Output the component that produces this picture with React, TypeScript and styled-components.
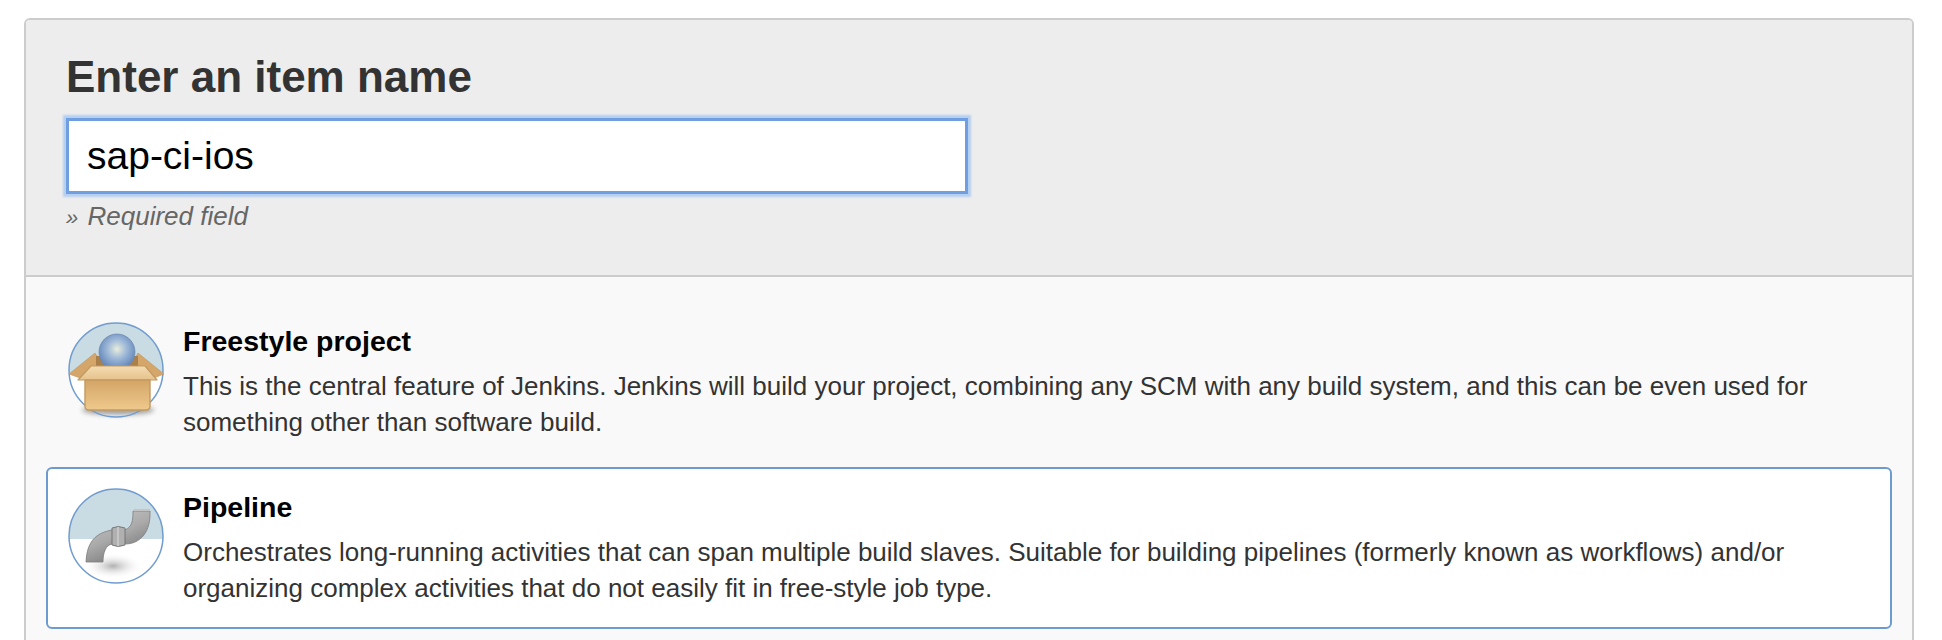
import React from 'react';
import styled, { createGlobalStyle } from 'styled-components';

const GlobalStyle = createGlobalStyle`
  html, body {
    margin: 0;
    height: 640px;
    overflow: hidden;
    background: #fff;
    font-family: 'Liberation Sans', Arial, sans-serif;
  }
`;

function BoxIcon() {
  return (
    <svg width="100" height="100" viewBox="0 0 100 100">
      <defs>
        <radialGradient id="ball" cx="0.5" cy="0.42" r="0.6">
          <stop offset="0" stopColor="#e8ecdc" />
          <stop offset="0.45" stopColor="#9db8d8" />
          <stop offset="1" stopColor="#5c7fb4" />
        </radialGradient>
        <linearGradient id="front" x1="0" y1="0" x2="0" y2="1">
          <stop offset="0" stopColor="#d3a567" />
          <stop offset="1" stopColor="#efc98c" />
        </linearGradient>
        <linearGradient id="flap" x1="0" y1="0" x2="0" y2="1">
          <stop offset="0" stopColor="#f3dcb2" />
          <stop offset="1" stopColor="#e6c28c" />
        </linearGradient>
        <clipPath id="boxClip">
          <circle cx="50" cy="50" r="47" />
        </clipPath>
        <filter id="boxBlur" x="-30%" y="-60%" width="160%" height="220%">
          <feGaussianBlur stdDeviation="2.5" />
        </filter>
      </defs>
      <circle cx="50" cy="50" r="47" fill="#fff" />
      <g clipPath="url(#boxClip)">
        <path d="M0 0H100V53H0Z" fill="#c9dbe3" />
      </g>
      <ellipse cx="52" cy="90" rx="36" ry="5" fill="#777" opacity="0.7" filter="url(#boxBlur)" />
      <circle cx="50" cy="50" r="47" fill="none" stroke="#709ccf" strokeWidth="1.5" />
      <path d="M3 54 L29 33 L38 47 L14 58 Z" fill="#d4a66a" stroke="#c0935a" strokeWidth="0.6" />
      <path d="M98 54 L72 33 L64 47 L88 58 Z" fill="#d4a66a" stroke="#c0935a" strokeWidth="0.6" />
      <path d="M30 36 H72 V47 H30 Z" fill="#a97f4a" />
      <circle cx="51" cy="32" r="18" fill="url(#ball)" stroke="#6d88b5" strokeWidth="0.7" />
      <path d="M25 46 H79 L91 60 H12 Z" fill="url(#flap)" stroke="#c49a60" strokeWidth="1.2" strokeLinejoin="round" />
      <path d="M19 60 H84 V86 Q84 90 80 90 H23 Q19 90 19 86 Z" fill="url(#front)" stroke="#c49a60" strokeWidth="1.4" />
    </svg>
  );
}

function PipeIcon() {
  return (
    <svg width="100" height="100" viewBox="0 0 100 100">
      <defs>
        <linearGradient id="pipeLow" x1="0" y1="0" x2="0.6" y2="1">
          <stop offset="0" stopColor="#cdcdcd" />
          <stop offset="0.55" stopColor="#aaaaaa" />
          <stop offset="1" stopColor="#767676" />
        </linearGradient>
        <radialGradient id="pipeShadow" cx="0.5" cy="0.5" r="0.5">
          <stop offset="0" stopColor="#b0b0b0" />
          <stop offset="1" stopColor="#ffffff" stopOpacity="0" />
        </radialGradient>
        <clipPath id="pipeClip">
          <circle cx="50" cy="50" r="47" />
        </clipPath>
      </defs>
      <circle cx="50" cy="50" r="47" fill="#fff" />
      <g clipPath="url(#pipeClip)">
        <path d="M0 0H100V53H0Z" fill="#c9dbe3" />
      </g>
      <ellipse cx="47" cy="80" rx="30" ry="13" fill="url(#pipeShadow)" />
      <circle cx="50" cy="50" r="47" fill="none" stroke="#709ccf" strokeWidth="1.5" />
      <path d="M20 76 C21 55 30 47 46 44 H59 C66 41 67 35 67 25 H84 C85 45 75 58 59 58 H46 C40 59 37 66 37 76 Z" fill="url(#pipeLow)" stroke="#7d7d7d" strokeWidth="0.8" />
      <path d="M46 42 Q52 39 59 42 V59 Q52 62 46 59 Z" fill="#b0b0b0" stroke="#707070" strokeWidth="0.9" />
      <path d="M52 41 V60" stroke="#d0d0d0" strokeWidth="1.4" />
      <path d="M67 25 H84 V23 H68 Z" fill="#c4c4c4" />
    </svg>
  );
}

export default function App() {
  return (
    <>
      <GlobalStyle />
      <Page>
        <Panel>
          <Header>
            <Title>Enter an item name</Title>
            <NameInput defaultValue="sap-ci-ios" />
            <Hint><Chevrons>»</Chevrons> Required field</Hint>
          </Header>
          <Categories>
            <Card>
              <IconWrap>
                <BoxIcon />
              </IconWrap>
              <CardBody>
                <CardTitle>Freestyle project</CardTitle>
                <CardText>
                  This is the central feature of Jenkins. Jenkins will build your project, combining any SCM with any build system, and this can be even used for something other than software build.
                </CardText>
              </CardBody>
            </Card>
            <Card $active>
              <IconWrap>
                <PipeIcon />
              </IconWrap>
              <CardBody>
                <CardTitle>Pipeline</CardTitle>
                <CardText>
                  Orchestrates long-running activities that can span multiple build slaves. Suitable for building pipelines (formerly known as workflows) and/or organizing complex activities that do not easily fit in free-style job type.
                </CardText>
              </CardBody>
            </Card>
          </Categories>
        </Panel>
      </Page>
    </>
  );
}

const Page = styled.div`
  padding: 18px 28px 0 24px;
  height: 622px;
  overflow: hidden;
`;

const Panel = styled.div`
  border: 2px solid #ccc;
  border-radius: 6px;
  background: #f9f9f9;
  height: 700px;
`;

const Header = styled.div`
  background: #ededed;
  border-bottom: 2px solid #ccc;
  border-radius: 4px 4px 0 0;
  box-sizing: border-box;
  height: 257px;
  padding: 33px 0 0 40px;
`;

const Title = styled.h1`
  margin: 0;
  font-size: 44px;
  line-height: 48px;
  font-weight: bold;
  color: #333;
`;

const NameInput = styled.input`
  display: block;
  box-sizing: border-box;
  width: 902px;
  height: 76px;
  margin: 17px 0 0;
  padding: 0 18px;
  border: 3px solid #6f9fe0;
  box-shadow: 0 0 2px 3px #b5cff0;
  outline: none;
  background: #fff;
  color: #000;
  font-family: inherit;
  font-size: 39px;
`;

const Hint = styled.div`
  margin-top: 5px;
  font-size: 26px;
  line-height: 34px;
  font-style: italic;
  color: #666;
`;

const Chevrons = styled.span`
  margin-right: 2px;
  font-size: 22px;
`;

const Categories = styled.div`
  display: flex;
  flex-direction: column;
  gap: 4px;
  padding: 24px 20px 0;
`;

const Card = styled.div<{ $active?: boolean }>`
  display: flex;
  box-sizing: border-box;
  height: 162px;
  padding: 17px 18px 0;
  border: 2px solid ${(p) => (p.$active ? '#6d9bce' : 'transparent')};
  border-radius: 6px;
  background: ${(p) => (p.$active ? '#fff' : 'transparent')};
`;

const IconWrap = styled.div`
  flex: none;
  width: 100px;
  height: 100px;
  margin-right: 17px;
`;

const CardBody = styled.div`
  flex: 1;
  min-width: 0;
  padding-top: 4px;
`;

const CardTitle = styled.div`
  font-size: 28.5px;
  line-height: 34px;
  font-weight: bold;
  color: #000;
`;

const CardText = styled.div`
  margin-top: 10px;
  font-size: 26px;
  line-height: 36px;
  color: #333;
`;
